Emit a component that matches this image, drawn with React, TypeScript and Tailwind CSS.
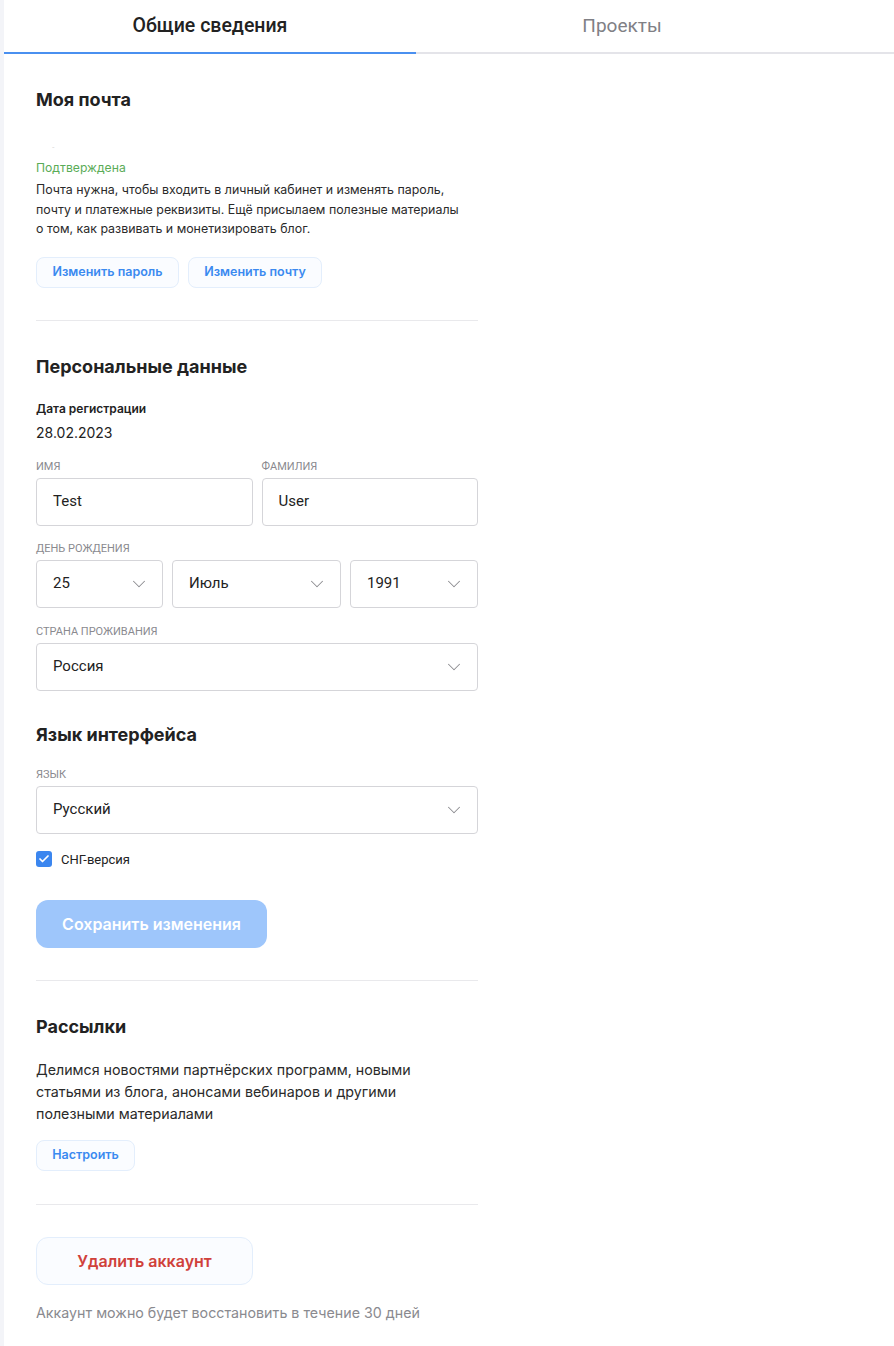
import { Check, ChevronDown } from "lucide-react";

const inter = { fontFamily: "Inter, 'Noto Sans', sans-serif" };
const roboto = { fontFamily: "Roboto, 'Noto Sans', sans-serif" };

function Label({ children }: { children: React.ReactNode }) {
  return (
    <div className="mb-[5px] text-[11px] uppercase leading-[13px] text-[#8a8a8f]" style={roboto}>
      {children}
    </div>
  );
}

function Field({ value, select = false, className = "" }: { value: string; select?: boolean; className?: string }) {
  return (
    <div
      className={`flex h-[48px] items-center justify-between rounded-[4px] border border-[#d5d5d9] bg-white pl-4 pr-[12px] text-[15px] text-[#222] ${className}`}
      style={roboto}
    >
      <span>{value}</span>
      {select && <ChevronDown className="h-[22px] w-[22px] text-[#8c8c90]" strokeWidth={1.1} />}
    </div>
  );
}

function LightButton({ children, className = "" }: { children: React.ReactNode; className?: string }) {
  return (
    <button
      className={`h-[31px] whitespace-nowrap rounded-[8px] border border-[#e3eefc] bg-[#fafcff] text-[12.5px] font-semibold text-[#3b8af0] ${className}`}
      style={inter}
    >
      {children}
    </button>
  );
}

function Heading({ children }: { children: React.ReactNode }) {
  return (
    <h2 className="text-[18px] font-bold leading-[24px] text-[#222]" style={inter}>
      {children}
    </h2>
  );
}

export default function App() {
  return (
    <div className="flex min-h-[1346px] bg-white">
      <div className="w-[4px] shrink-0 bg-[#f3f4f8]" />
      <div className="flex-1">
        {/* Tabs */}
        <div className="flex border-b-2 border-[#e4e4e9]" style={roboto}>
          <div className="-mb-[2px] flex h-[54px] w-[412px] items-center justify-center border-b-2 border-[#4a90f0] text-[19.5px] font-medium text-[#222]">
            Общие сведения
          </div>
          <div className="flex h-[52px] w-[412px] items-center justify-center text-[19px] text-[#808085]">
            Проекты
          </div>
        </div>

        <div className="w-[474px] pl-[32px]">
          {/* Email */}
          <section className="pt-[34px]">
            <Heading>Моя почта</Heading>
            <div className="mt-[28px] h-[14px] pl-[16px] text-[8px] leading-[14px] text-[#ddd]">-</div>
            <div className="mt-[5px] text-[12.2px] leading-[18px] text-[#5aac57]" style={inter}>
              Подтверждена
            </div>
            <p className="mt-[3px] w-[432px] text-[12.4px] leading-[19.5px] text-[#2a2a2a]" style={inter}>
              Почта нужна, чтобы входить в личный кабинет и изменять пароль, почту и платежные реквизиты. Ещё присылаем полезные материалы о том, как развивать и монетизировать блог.
            </p>
            <div className="mt-[18px] flex gap-[9px]">
              <LightButton className="w-[143px]">Изменить пароль</LightButton>
              <LightButton className="w-[134px]">Изменить почту</LightButton>
            </div>
          </section>

          <div className="mt-[32px] h-px bg-[#e9e9ec]" />

          {/* Personal */}
          <section className="pt-[34px]">
            <Heading>Персональные данные</Heading>
            <div className="mt-[22px] text-[12px] font-semibold leading-[16px] text-[#222]" style={inter}>
              Дата регистрации
            </div>
            <div className="mt-[7px] text-[14px] leading-[18px] text-[#222]" style={inter}>
              28.02.2023
            </div>
            <div className="mt-[18px] grid grid-cols-2 gap-[9px]">
              <div>
                <Label>Имя</Label>
                <Field value="Test" />
              </div>
              <div>
                <Label>Фамилия</Label>
                <Field value="User" />
              </div>
            </div>
            <div className="mt-[16px]">
              <Label>День рождения</Label>
              <div className="flex gap-[9px]">
                <Field value="25" select className="w-[127px]" />
                <Field value="Июль" select className="w-[169px]" />
                <Field value="1991" select className="flex-1" />
              </div>
            </div>
            <div className="mt-[17px]">
              <Label>Страна проживания</Label>
              <Field value="Россия" select />
            </div>
          </section>

          {/* Language */}
          <section className="pt-[32px]">
            <Heading>Язык интерфейса</Heading>
            <div className="mt-[21px]">
              <Label>Язык</Label>
              <Field value="Русский" select />
            </div>
            <div className="mt-[16px] flex items-center gap-[9px]">
              <div className="flex h-[16px] w-[16px] items-center justify-center rounded-[3px] bg-[#3b86ef]">
                <Check className="h-[12px] w-[12px] text-white" strokeWidth={3.5} />
              </div>
              <span className="text-[13px] text-[#222]" style={roboto}>
                СНГ-версия
              </span>
            </div>
            <button
              className="mt-[31px] h-[48px] w-[231px] rounded-[12px] bg-[#9ec6fb] text-[16px] font-semibold text-white"
              style={inter}
            >
              Сохранить изменения
            </button>
          </section>

          <div className="mt-[32px] h-px bg-[#e9e9ec]" />

          {/* Newsletters */}
          <section className="pt-[34px]">
            <Heading>Рассылки</Heading>
            <p className="mt-[20px] w-[400px] text-[14.25px] leading-[22px] text-[#2a2a2a]" style={inter}>
              Делимся новостями партнёрских программ, новыми статьями из блога, анонсами вебинаров и другими полезными материалами
            </p>
            <LightButton className="mt-[15px] w-[99px]">Настроить</LightButton>
          </section>

          <div className="mt-[33px] h-px bg-[#e9e9ec]" />

          {/* Delete */}
          <section className="pt-[32px]">
            <button
              className="h-[48px] w-[217px] rounded-[12px] border border-[#e3eefc] bg-[#fafcff] text-[16px] font-semibold text-[#d0413b]"
              style={inter}
            >
              Удалить аккаунт
            </button>
            <p className="mt-[18px] text-[14.25px] leading-[20px] text-[#8a8a8f]" style={inter}>
              Аккаунт можно будет восстановить в течение 30 дней
            </p>
          </section>
        </div>
      </div>
    </div>
  );
}
